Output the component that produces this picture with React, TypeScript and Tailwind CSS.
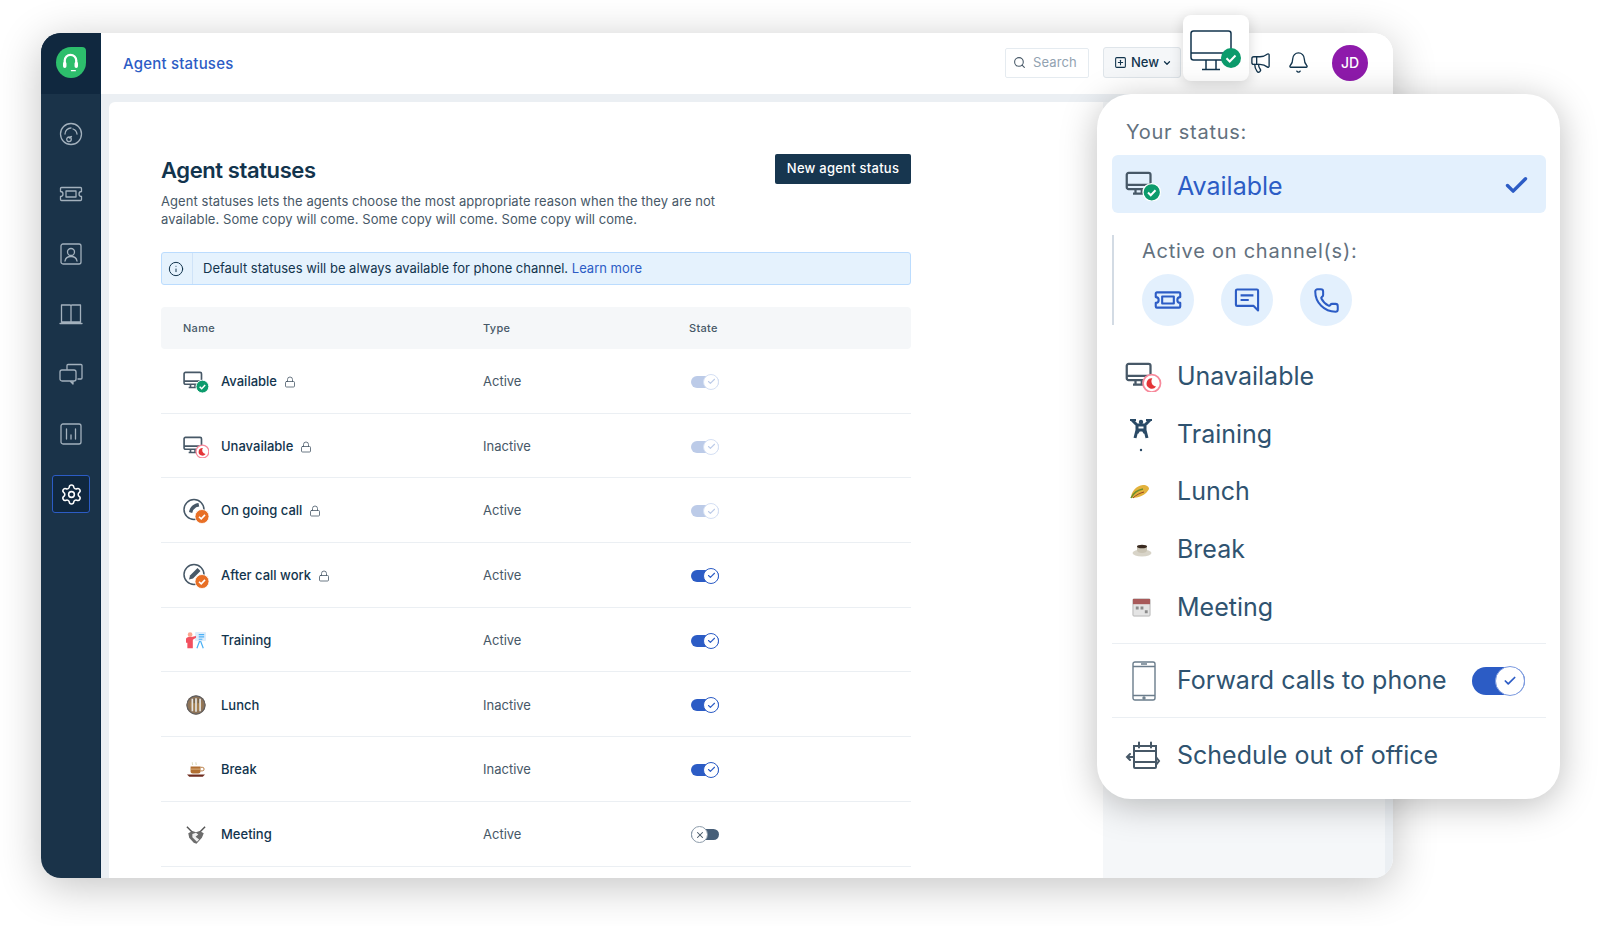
import { Bell, Check, ChevronDown, Info, Lock, Megaphone, Phone, Search, Settings, SquarePlus, X } from 'lucide-react';

type RowState = 'disabled' | 'on' | 'off';

const rows: { name: string; type: string; icon: string; locked: boolean; state: RowState }[] = [
  { name: 'Available', type: 'Active', icon: 'available', locked: true, state: 'disabled' },
  { name: 'Unavailable', type: 'Inactive', icon: 'unavailable', locked: true, state: 'disabled' },
  { name: 'On going call', type: 'Active', icon: 'call', locked: true, state: 'disabled' },
  { name: 'After call work', type: 'Active', icon: 'work', locked: true, state: 'on' },
  { name: 'Training', type: 'Active', icon: 'training', locked: false, state: 'on' },
  { name: 'Lunch', type: 'Inactive', icon: 'lunch', locked: false, state: 'on' },
  { name: 'Break', type: 'Inactive', icon: 'break', locked: false, state: 'on' },
  { name: 'Meeting', type: 'Active', icon: 'meeting', locked: false, state: 'off' },
];

const MonitorGlyph = ({ kind }: { kind: 'available' | 'unavailable' }) => (
  <>
    <rect x="1" y="1.5" width="19" height="13" rx="1.5" fill="none" stroke="#475867" strokeWidth="1.8" />
    <path d="M1 11h19M8 14.5v3M13 14.5v3M6 18h9" fill="none" stroke="#475867" strokeWidth="1.8" />
    {kind === 'available' ? (
      <>
        <circle cx="21" cy="17" r="7" fill="#0c9b6c" stroke="#fff" />
        <path d="M18 17.2l2.2 2.2 3.8-4" fill="none" stroke="#fff" strokeWidth="1.6" />
      </>
    ) : (
      <>
        <circle cx="21" cy="17" r="7" fill="#fff" stroke="#f7899b" strokeWidth="1.4" />
        <path d="M21.5 13a4.200 4.200 0 1 0 3 6.600 4.200 4.200 0 0 1-3-6.600z" fill="#e43538" />
      </>
    )}
  </>
);

const RoundBadgeGlyph = ({ kind }: { kind: 'call' | 'work' }) => (
  <>
    <circle cx="11" cy="11" r="10" fill="none" stroke="#475867" strokeWidth="1.5" />
    {kind === 'call' ? (
      <path d="M15.500 4.500c-5 .5-9 4.500-9.500 9l3.200 1 1-3 3-2.800 3-.6z" fill="#475867" />
    ) : (
      <path d="M14.500 4.500l3 3-7.500 7.500-4 1 1-4z" fill="#475867" />
    )}
    <circle cx="19" cy="18" r="7" fill="#e86f25" stroke="#fff" strokeWidth="0.800" />
    <path d="M16 18.200l2.200 2.200 3.800-4" fill="none" stroke="#fff" strokeWidth="1.600" />
  </>
);

const RowIcon = ({ icon }: { icon: string }) => {
  if (icon === 'available' || icon === 'unavailable') {
    return (
      <svg viewBox="0 0 28 24" className="h-[22px] w-[26px]">
        <MonitorGlyph kind={icon} />
      </svg>
    );
  }
  if (icon === 'call' || icon === 'work') {
    return (
      <svg viewBox="0 0 26 25" className="h-[26px] w-[26px]">
        <RoundBadgeGlyph kind={icon} />
      </svg>
    );
  }
  if (icon === 'training') {
    return (
      <svg viewBox="0 0 24 22" className="ml-[2px] h-[20px] w-[22px]">
        <rect x="11" y="1" width="12" height="10" rx="1" fill="#dcecfb" />
        <path d="M15 4h6M15 6.5h6M15 9h4" stroke="#4ab0f5" strokeWidth="1.2" />
        <path d="M16 11l-3 8M17 11l3 8" stroke="#4ab0f5" strokeWidth="1.3" />
        <circle cx="5.5" cy="4" r="2.6" fill="#fba58f" />
        <path d="M1 9c0-1.5 1.5-2.500 3-2.500h3L12 5.500v2L8.500 9.500V19h-6v-6H1z" fill="#f2505f" />
      </svg>
    );
  }
  if (icon === 'lunch') {
    return (
      <svg viewBox="0 0 22 22" className="ml-[3px] h-[20px] w-[20px]">
        <circle cx="11" cy="11" r="10.500" fill="#8f7458" />
        <circle cx="11" cy="11" r="10" fill="none" stroke="#5f5f62" strokeWidth="1.200" />
        <circle cx="11" cy="11" r="6.500" fill="#a4804f" />
        <path d="M7 4v14M11 3.500v15M15.500 4v14" stroke="#e6e6e6" strokeWidth="1.800" />
        <path d="M9 4v5M13.500 4v5" stroke="#4d4d4d" strokeWidth="0.800" />
      </svg>
    );
  }
  if (icon === 'break') {
    return (
      <svg viewBox="0 0 22 20" className="ml-[3px] h-[18px] w-[20px]">
        <path d="M7 1.500c-1 1 1 1.500 0 3M11 1.500c-1 1 1 1.500 0 3" stroke="#cfcfa8" fill="none" />
        <path d="M5 6h11v5.500c0 1.500-1 2.500-2.500 2.500h-6C6 14 5 13 5 11.500z" fill="#b16f32" />
        <path d="M5 9h11" stroke="#e0b887" />
        <path d="M16 7h2a1.500 1.500 0 0 1 0 4h-2" fill="none" stroke="#b16f32" />
        <path d="M1 15h20l-2.500 2.500h-15z" fill="#6f2c1f" />
      </svg>
    );
  }
  return (
    <svg viewBox="0 0 22 22" className="ml-[3px] h-[20px] w-[20px]">
      <path d="M1 2l6 6M21 2l-6 6" stroke="#555" strokeWidth="1.600" />
      <path d="M2.500 9L7 6.500l4 1.500 4-1.500 4.500 2.500-2 5-6 6.500-3-1-5-5.500z" fill="#6c6c6c" />
      <path d="M7 10l4-1.500 2.500 2-3 2.500 4 3-2.500 2.500-5-5z" fill="#f1f1f1" />
    </svg>
  );
};

const Toggle = ({ state }: { state: RowState }) => {
  if (state === 'off') {
    return (
      <div className="relative h-[11px] w-[28px] rounded-full bg-[#475f78]">
        <span className="absolute left-0 top-[-3px] flex h-[17px] w-[17px] items-center justify-center rounded-full border border-[#8d9cab] bg-white">
          <X size={10} strokeWidth={2.5} className="text-[#475867]" />
        </span>
      </div>
    );
  }
  const disabled = state === 'disabled';
  return (
    <div className={`relative h-[12px] w-[28px] rounded-full ${disabled ? 'bg-[#bccbe8]' : 'bg-[#2c5cc5]'}`}>
      <span
        className={`absolute right-0 top-[-2px] flex h-[16px] w-[16px] items-center justify-center rounded-full border bg-white ${
          disabled ? 'border-[#d5e0f4]' : 'border-[#2c5cc5]'
        }`}
      >
        <Check size={9} strokeWidth={3} className={disabled ? 'text-[#bccbe8]' : 'text-[#2c5cc5]'} />
      </span>
    </div>
  );
};

const NavIcon = ({ d }: { d: string }) => (
  <div className="flex h-[60px] w-[60px] items-center justify-center">
    <svg viewBox="0 0 24 24" className="h-[24px] w-[24px]" fill="none" stroke="#a3b1bd" strokeWidth="1.300" strokeLinecap="round" strokeLinejoin="round">
      <path d={d} />
    </svg>
  </div>
);

const navPaths = [
  'M12 1.500a10.500 10.500 0 1 1 0 21 10.500 10.500 0 0 1 0-21zM6 12a6 6 0 0 1 6-6M14 7a6 6 0 0 1 4 5M12.500 14.500L10.500 16M10 15a2.300 2.300 0 1 0 0 4.600 2.300 2.300 0 0 0 0-4.600z',
  'M2.500 5.500h19a1 1 0 0 1 1 1v3a2.500 2.500 0 0 0 0 5v3a1 1 0 0 1-1 1h-19a1 1 0 0 1-1-1v-3a2.500 2.500 0 0 0 0-5v-3a1 1 0 0 1 1-1zM7 9h10v6H7z',
  'M4 2h16a2 2 0 0 1 2 2v16a2 2 0 0 1-2 2H4a2 2 0 0 1-2-2V4a2 2 0 0 1 2-2zM12 6.500a3.500 3.500 0 1 1 0 7 3.500 3.500 0 0 1 0-7zM6 19c.5-3 3-4.500 6-4.500s5.500 1.500 6 4.500',
  'M2.500 3h8.500a1 1 0 0 1 1 1v16H2.500zM21.500 3H13a1 1 0 0 0-1 1v16h9.500zM1 21.500h22',
  'M8 7V3.500a1 1 0 0 1 1-1h13a1 1 0 0 1 1 1V16a1 1 0 0 1-1 1h-3M3 8h12a2 2 0 0 1 2 2v7a2 2 0 0 1-2 2H3a2 2 0 0 1-2-2v-7a2 2 0 0 1 2-2zM14 19v3l-3-3',
  'M4 2h16a2 2 0 0 1 2 2v16a2 2 0 0 1-2 2H4a2 2 0 0 1-2-2V4a2 2 0 0 1 2-2zM7.500 7v10M12 13v4M16.500 7v10',
];

const Sidebar = () => (
  <aside className="flex w-[60px] shrink-0 flex-col border-r border-[#0d2a44] bg-[#1a3349]">
    <div className="flex h-[61px] items-center justify-center bg-[#10283f] pb-[2px]">
      <div className="flex h-[31px] w-[30px] items-center justify-center rounded-[50%_4px_50%_50%] bg-[#2dbe6c]">
        <svg viewBox="0 0 24 24" className="h-[23px] w-[23px]" fill="none" stroke="#fff" strokeWidth="2.400" strokeLinecap="round">
          <path d="M6 13V10a6 6 0 0 1 12 0v3" />
          <path d="M6 13v3M18 13v3" strokeWidth="3.600" />
          <path d="M17 20.500h-4" strokeWidth="1.400" />
        </svg>
      </div>
    </div>
    <div className="mt-[10px] flex flex-col">
      {navPaths.map((d) => (
        <NavIcon key={d} d={d} />
      ))}
      <div className="flex h-[60px] w-[60px] items-center justify-center">
        <div className="flex h-[38px] w-[38px] items-center justify-center rounded-[3px] border border-[#2c5cc5] bg-[#10283f]">
          <Settings size={23} strokeWidth={1.6} className="text-white" />
        </div>
      </div>
    </div>
  </aside>
);

const Header = () => (
  <header className="flex h-[61px] items-center bg-white pb-[2px] pl-[22px] pr-[25px]">
    <span className="pt-[3px] text-[15px] font-medium tracking-[0.2px] text-[#2c5cc5]">Agent statuses</span>
    <div className="ml-auto flex h-[30px] w-[84px] items-center gap-[7px] rounded-[2px] border border-[#e5ebf0] pl-[7px] text-[13px] tracking-[0.1px] text-[#92a2b1]">
      <Search size={13} className="text-[#475867]" />
      Search
    </div>
    <div className="ml-[14px] flex h-[31px] w-[78px] items-center rounded-[3px] border border-[#dfe5ea] bg-[#f5f7f9] pl-[10px] text-[13px] font-medium text-[#12344d]">
      <SquarePlus size={13} />
      <span className="ml-[4px]">New</span>
      <ChevronDown size={10} strokeWidth={3} className="ml-[3px]" />
    </div>
    <Megaphone size={23} strokeWidth={1.4} className="ml-[68px] text-[#12344d]" />
    <Bell size={23} strokeWidth={1.4} className="ml-[15px] text-[#12344d]" />
    <div className="ml-[22px] flex h-[36px] w-[36px] items-center justify-center rounded-full bg-[#8e1aab] text-[14px] font-medium text-white">JD</div>
  </header>
);

const StatusTable = () => (
  <div className="mt-[22px] w-[750px]">
    <div className="flex h-[42px] items-center rounded-[4px] bg-[#f5f7f9] text-[11px] font-medium tracking-[0.3px] text-[#475867]">
      <span className="w-[322px] pl-[22px]">Name</span>
      <span className="w-[206px]">Type</span>
      <span>State</span>
    </div>
    {rows.map((row) => (
      <div key={row.name} className="flex h-[64.7px] items-center border-b border-[#ebeff3] pt-[2px] text-[13px]">
        <div className="flex w-[322px] items-center pl-[22px]">
          <div className="w-[38px]">
            <RowIcon icon={row.icon} />
          </div>
          <span className="font-medium text-[#12344d]">{row.name}</span>
          {row.locked && <Lock size={12} strokeWidth={1.6} className="ml-[7px] text-[#475867]" />}
        </div>
        <span className="w-[208px] text-[#475867]">{row.type}</span>
        <Toggle state={row.state} />
      </div>
    ))}
  </div>
);

const Content = () => (
  <main className="flex min-h-0 flex-1 overflow-hidden bg-[#ebeff3] pl-[8px] pr-[8px] pt-[8px]">
    <div className="w-[994px] shrink-0 rounded-tl-[6px] bg-white pl-[52px] pt-[51px]">
      <div className="flex w-[750px] items-start justify-between">
        <div>
          <h1 className="mt-[2px] text-[22px] font-semibold leading-[30px] tracking-[-0.4px] text-[#12344d]">Agent statuses</h1>
          <p className="mt-[7px] w-[575px] text-[13px] leading-[18px] tracking-[0.06px] text-[#475867]">
            Agent statuses lets the agents choose the most appropriate reason when the they are not available. Some copy will come. Some copy will come. Some copy will come.
          </p>
        </div>
        <button className="mt-[1px] h-[30px] w-[136px] rounded-[2px] bg-[#17364f] text-[13px] font-medium tracking-[0.25px] text-white">New agent status</button>
      </div>
      <div className="mt-[24px] flex h-[33px] w-[750px] items-center rounded-[3px] border border-[#bbdcfe] bg-[#e5f2fd] text-[13px] text-[#12344d]">
        <div className="flex h-full w-[31px] items-center justify-center border-r border-[#cfe3f8] pr-[3px]">
          <Info size={16} strokeWidth={1.5} />
        </div>
        <span className="ml-[10px]">
          Default statuses will be always available for phone channel. <span className="text-[#2c5cc5]">Learn more</span>
        </span>
      </div>
      <StatusTable />
    </div>
    <div className="flex-1 bg-[#f5f7f9]" />
  </main>
);

const Item = ({ icon, label }: { icon: React.ReactNode; label: string }) => (
  <div className="flex h-[57.7px] items-center pl-[13px] pt-[2px] text-[25px] text-[#2f5370]">
    <div className="flex w-[52px]">{icon}</div>
    {label}
  </div>
);

const Popover = () => (
  <div className="absolute left-[1097px] top-[94px] flex h-[705px] w-[463px] flex-col rounded-[34px] bg-white pl-[15px] pr-[14px] pt-[25px] shadow-[0_6px_36px_rgba(0,0,0,0.26)]">
    <div className="pl-[14px] text-[20px] leading-[26px] tracking-[0.75px] text-[#63717e]">Your status:</div>
    <div className="mt-[10px] flex h-[58px] items-center rounded-[6px] bg-[#e3f0fd] pl-[13px] pr-[16px] pt-[6px] text-[25px] text-[#2c5cc5]">
      <div className="-mt-[3px] -ml-[2px] flex w-[54px]">
        <svg viewBox="0 0 28 24" className="h-[30px] w-[40px]">
          <MonitorGlyph kind="available" />
        </svg>
      </div>
      Available
      <Check size={27} strokeWidth={3} className="-mt-[4px] ml-auto" />
    </div>
    <div className="mt-[22px] h-[90px] border-l-2 border-[#d3dbe4] pl-[28px] pt-[2px]">
      <div className="text-[20px] leading-[28px] tracking-[0.75px] text-[#63717e]">Active on channel(s):</div>
      <div className="mt-[9px] flex gap-[27px]">
        <div className="flex h-[52px] w-[52px] items-center justify-center rounded-full bg-[#e3f0fd]">
          <svg viewBox="0 0 24 24" className="h-[28px] w-[28px]" fill="none" stroke="#2c5cc5" strokeWidth="1.800" strokeLinejoin="round">
            <path d="M2.500 5.500h19a1 1 0 0 1 1 1v3a2.500 2.500 0 0 0 0 5v3a1 1 0 0 1-1 1h-19a1 1 0 0 1-1-1v-3a2.500 2.500 0 0 0 0-5v-3a1 1 0 0 1 1-1zM7 9h10v6H7z" />
          </svg>
        </div>
        <div className="flex h-[52px] w-[52px] items-center justify-center rounded-full bg-[#e3f0fd]">
          <svg viewBox="0 0 24 24" className="h-[28px] w-[28px]" fill="none" stroke="#2c5cc5" strokeWidth="1.800" strokeLinejoin="round">
            <path d="M3.500 3h17a1 1 0 0 1 1 1v17l-4-4h-14a1 1 0 0 1-1-1V4a1 1 0 0 1 1-1zM6.500 8h11M6.500 12h7" />
          </svg>
        </div>
        <div className="flex h-[52px] w-[52px] items-center justify-center rounded-full bg-[#e3f0fd]">
          <Phone size={27} strokeWidth={1.8} className="text-[#2c5cc5]" />
        </div>
      </div>
    </div>
    <div className="mt-[22px]">
      <Item
        label="Unavailable"
        icon={
          <svg viewBox="0 0 28 24" className="-ml-[2px] h-[30px] w-[40px]">
            <MonitorGlyph kind="unavailable" />
          </svg>
        }
      />
      <Item
        label="Training"
        icon={
          <svg viewBox="0 0 24 36" className="ml-[4px] h-[36px] w-[24px]">
            <path d="M3 3l5 5v5l-2 8M21 3l-5 5v5l2 8M8 8h8v5H8zM10 13l-2 3M14 13l2 3" fill="none" stroke="#2a4a66" strokeWidth="3" />
            <path d="M1 3h6M17 3h6" stroke="#2a4a66" strokeWidth="2" />
            <circle cx="12" cy="5" r="2.200" fill="#2a4a66" />
            <circle cx="12" cy="33" r="1.200" fill="#2a4a66" />
          </svg>
        }
      />
      <Item
        label="Lunch"
        icon={
          <svg viewBox="0 0 20 16" className="ml-[5px] h-[18px] w-[20px]">
            <path d="M1 14C1 8 6 1.500 13 1c4 0 6 2 6 4-3 6-10 9-18 9z" fill="#e3b23c" />
            <path d="M1 14c2-4 6-8 12-9" stroke="#6d8f2c" strokeWidth="1.600" fill="none" />
            <path d="M3 14c3-3 7-5 11-6" stroke="#9a4a22" strokeWidth="1" fill="none" />
          </svg>
        }
      />
      <Item
        label="Break"
        icon={
          <svg viewBox="0 0 20 14" className="ml-[7px] h-[14px] w-[20px]">
            <ellipse cx="10" cy="10" rx="9.500" ry="3.500" fill="#d8d4c8" />
            <path d="M5 3h10v4c0 2-2 3-5 3s-5-1-5-3z" fill="#c9c3b3" />
            <ellipse cx="10" cy="3.500" rx="5" ry="1.800" fill="#3a2a20" />
          </svg>
        }
      />
      <Item
        label="Meeting"
        icon={
          <svg viewBox="0 0 20 20" className="ml-[7px] h-[19px] w-[19px]">
            <rect x="1" y="1" width="18" height="18" rx="1" fill="#e4e4e4" stroke="#b5b5b5" />
            <rect x="1" y="1" width="18" height="5.500" fill="#a85a5a" />
            <path d="M4 9h3v3H4zM9 9h3v3H9zM13.500 13h3v3h-3z" fill="#8c8c8c" />
          </svg>
        }
      />
    </div>
    <div className="mt-[8px] flex h-[75px] items-center border-y border-[#ebeff3] pl-[13px] pr-[21px] text-[25px] text-[#2f5370]">
      <div className="flex w-[52px]">
        <svg viewBox="0 0 24 40" className="ml-[7px] h-[40px] w-[24px]" fill="none" stroke="#6b7d8c" strokeWidth="1.400">
          <rect x="1" y="1" width="22" height="38" rx="2" />
          <path d="M1 5.500h22M1 34.500h22M9 3h6" />
          <circle cx="12" cy="37" r="1" />
        </svg>
      </div>
      Forward calls to phone
      <div className="relative ml-auto h-[28px] w-[53px] rounded-full bg-[#2c5cc5]">
        <span className="absolute right-0 top-[-1px] flex h-[30px] w-[30px] items-center justify-center rounded-full border border-[#7d9be0] bg-white">
          <Check size={14} strokeWidth={3} className="text-[#2c5cc5]" />
        </span>
      </div>
    </div>
    <div className="flex h-[73px] items-center pl-[13px] pt-[1px] text-[25px] text-[#2f5370]">
      <div className="flex w-[52px]">
        <svg viewBox="0 0 36 30" className="h-[30px] w-[36px]" fill="none" stroke="#475867" strokeWidth="2" strokeLinecap="round">
          <path d="M9 6h22v21a1 1 0 0 1-1 1H10a1 1 0 0 1-1-1zM9 11h22M14 2.500v5M26 2.500v5M9 17H2M5 14l-3 3 3 3M9 22h22M31 17l3 4-3 4" />
        </svg>
      </div>
      Schedule out of office
    </div>
  </div>
);

const StatusCard = () => (
  <div className="absolute left-[1183px] top-[15px] flex h-[66px] w-[66px] items-center justify-center rounded-[8px] bg-white pt-[5px] shadow-[0_3px_14px_rgba(0,0,0,0.16)]">
    <svg viewBox="0 0 52 42" className="h-[42px] w-[52px]">
      <rect x="1" y="1" width="40" height="29" rx="2.500" fill="none" stroke="#12344d" strokeWidth="1.500" />
      <path d="M1 23h40M16 30v9M26 30v9M12 39.500h18" fill="none" stroke="#12344d" strokeWidth="1.500" />
      <circle cx="41" cy="28" r="10" fill="#0c9b6c" />
      <path d="M36.500 28.300l3.200 3.200 5.800-6" fill="none" stroke="#fff" strokeWidth="2" />
    </svg>
  </div>
);

export default function App() {
  return (
    <div className="relative h-[926px] w-[1600px] overflow-hidden bg-white pl-[41px] pt-[33px] font-['Inter',sans-serif]">
      <div className="flex h-[845px] w-[1352px] overflow-hidden rounded-[20px] bg-white shadow-[0_8px_44px_rgba(0,0,0,0.24)]">
        <Sidebar />
        <div className="flex min-w-0 flex-1 flex-col">
          <Header />
          <Content />
        </div>
      </div>
      <StatusCard />
      <Popover />
    </div>
  );
}
